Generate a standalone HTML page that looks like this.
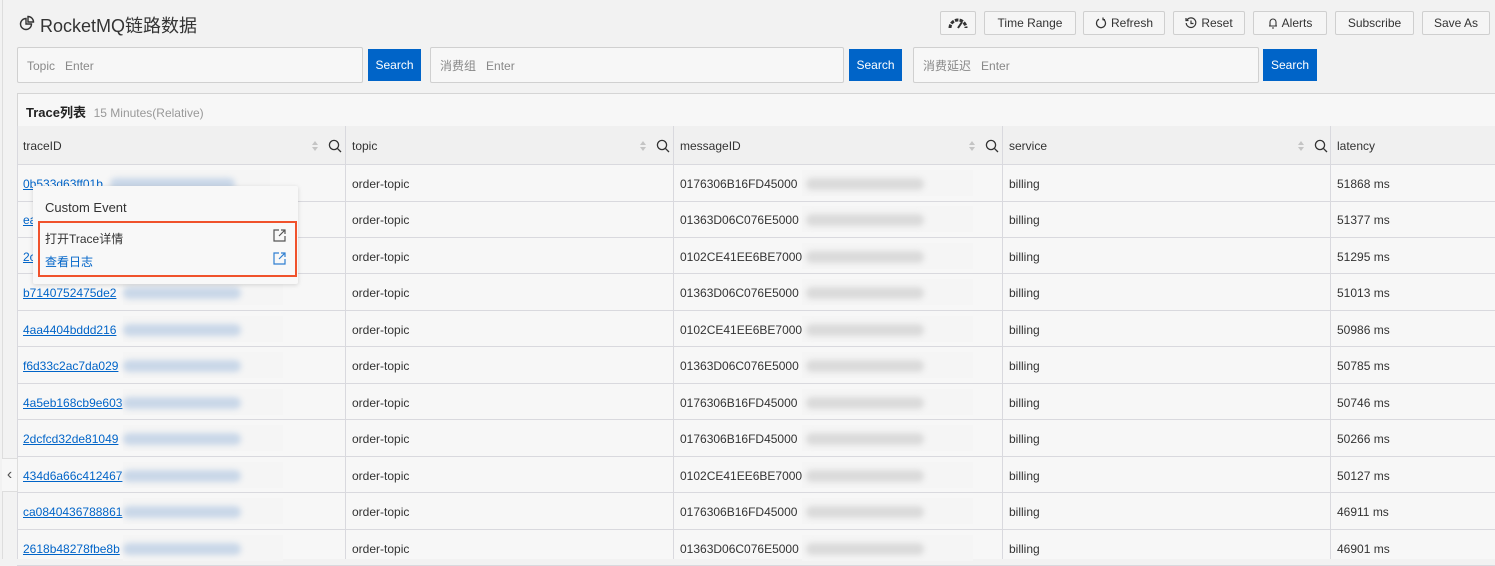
<!DOCTYPE html>
<html><head><meta charset="utf-8"><style>
*{box-sizing:border-box;margin:0;padding:0}
body{width:1495px;height:559px;overflow:hidden;background:#f2f2f2;font-family:"Liberation Sans","Noto Sans CJK SC",sans-serif;font-size:12px;color:#333;position:relative}
.a{position:absolute}
.btn{position:absolute;top:11px;height:24px;border:1px solid #cfcfcf;background:#f5f5f5;font-size:12px;color:#333;display:flex;align-items:center;justify-content:center;gap:4px;border-radius:2px}
.inp{position:absolute;top:47px;height:36px;border:1px solid #d0d0d0;background:#f7f7f7;border-radius:2px;color:#888;font-size:12px;line-height:36px;padding-left:9px}
.inp span{margin-left:10px}
.sb{position:absolute;top:49px;height:32px;background:#0064c8;color:#fff;font-size:12px;line-height:32px;text-align:center}
.row{position:absolute;left:17px;width:1478px;border-bottom:1px solid #d9d9de;height:36.5px}
.c{position:absolute;font-size:12px;color:#333;top:12px}
.vl{position:absolute;top:126px;bottom:0;width:1px;background:#d9d9de}
.lnk{color:#0064c8;text-decoration:underline}
.blur{position:absolute;height:12px;border-radius:6px;background:#c9d7e8;filter:blur(3px)}
.gb{position:absolute;height:12px;border-radius:6px;background:#dadada;filter:blur(3px)}
.cov{position:absolute;height:26px;background:#f5f5f5}
</style></head><body>
<div class="a" style="left:2px;top:0;width:1px;height:559px;background:#ddd"></div>
<svg class="a" style="left:19px;top:15px" width="16" height="16" viewBox="0 0 16 16" fill="none" stroke="#333" stroke-width="1.4"><path d="M7 3.5A5.5 5.5 0 1 0 12.5 9H7Z"/><path d="M9 1.5v5.5h5.5A5.5 5.5 0 0 0 9 1.5Z"/></svg>
<div class="a" style="left:40px;top:12px;font-size:18px;color:#333">RocketMQ链路数据</div>

<div class="btn" style="left:940px;width:36px"><svg width="22" height="12" viewBox="0 0 22 12"><path d="M3 11A8 8 0 0 1 19 11" fill="none" stroke="#333" stroke-width="3" stroke-dasharray="3.5 1.2"/><path d="M11 11L15 5" stroke="#333" stroke-width="2"/></svg></div>
<div class="btn" style="left:984px;width:92px">Time Range</div>
<div class="btn" style="left:1083px;width:82px"><svg width="12" height="12" viewBox="0 0 12 12" fill="none" stroke="#333" stroke-width="1.2"><path d="M4 2.2A4.5 4.5 0 1 0 8 2.2"/><path d="M8 0.5V2.6H10"/></svg>Refresh</div>
<div class="btn" style="left:1173px;width:72px"><svg width="12" height="12" viewBox="0 0 12 12" fill="none" stroke="#333" stroke-width="1.2"><path d="M2 3A4.8 4.8 0 1 1 1.2 6"/><path d="M1 1v2.5h2.5M6 3.5V6.5H8.5"/></svg>Reset</div>
<div class="btn" style="left:1253px;width:74px"><svg width="10" height="12" viewBox="0 0 10 12"><path d="M2 9V5a3 3 0 0 1 6 0v4H1h8M4 11h2" fill="none" stroke="#333" stroke-width="1.1"/></svg>Alerts</div>
<div class="btn" style="left:1335px;width:79px">Subscribe</div>
<div class="btn" style="left:1422px;width:68px">Save As</div>

<div class="inp" style="left:17px;width:346px">Topic<span>Enter</span></div>
<div class="sb" style="left:368px;width:53px">Search</div>
<div class="inp" style="left:430px;width:414px">消费组<span>Enter</span></div>
<div class="sb" style="left:849px;width:53px">Search</div>
<div class="inp" style="left:913px;width:346px">消费延迟<span>Enter</span></div>
<div class="sb" style="left:1263px;width:54px">Search</div>

<div class="a" style="left:17px;top:93px;width:1478px;height:466px;background:#f7f7f7;border-top:1px solid #d5d5d5;border-left:1px solid #d5d5d5"></div>
<div class="a" style="left:26px;top:102px;font-size:13px;font-weight:bold;color:#222">Trace列表 <span style="font-weight:normal;color:#999;font-size:12px;margin-left:4px">15 Minutes(Relative)</span></div>
<div class="a" style="left:17px;top:126px;width:1478px;height:39px;background:#f0f0f0;border-bottom:1px solid #d9d9de"></div>
<div class="vl" style="left:17px"></div>
<div class="vl" style="left:345px"></div><div class="vl" style="left:673px"></div><div class="vl" style="left:1002px"></div><div class="vl" style="left:1330px"></div>
<div class="c" style="left:23px;top:139px">traceID</div>
<div class="c" style="left:352px;top:139px">topic</div>
<div class="c" style="left:680px;top:139px">messageID</div>
<div class="c" style="left:1009px;top:139px">service</div>
<div class="c" style="left:1337px;top:139px">latency</div>
<div id="hd"></div>

<div id="rows"></div>
<script>
var hx=[311,639,968,1297],hh="";
for(var k=0;k<4;k++){hh+='<svg class="a" style="left:'+hx[k]+'px;top:140px" width="8" height="12" viewBox="0 0 8 12"><path d="M4 1L7 5H1Z M4 11L7 7H1Z" fill="#c4c4c4"/></svg><svg class="a" style="left:'+(hx[k]+17)+'px;top:139px" width="14" height="14" viewBox="0 0 14 14" fill="none" stroke="#333" stroke-width="1.3"><circle cx="6" cy="6" r="4.6"/><path d="M9.4 9.4L13 13"/></svg>';}
document.getElementById('hd').innerHTML=hh;
var t=["0b533d63ff01b","ea","2c","b7140752475de2","4aa4404bddd216","f6d33c2ac7da029","4a5eb168cb9e603","2dcfcd32de81049","434d6a66c412467","ca0840436788861","2618b48278fbe8b"];
var m=["0176306B16FD45000","01363D06C076E5000","0102CE41EE6BE70008","01363D06C076E5000","0102CE41EE6BE70008","01363D06C076E5000","0176306B16FD45000","0176306B16FD45000","0102CE41EE6BE70008","0176306B16FD45000","01363D06C076E5000"];
var l=["51868","51377","51295","51013","50986","50785","50746","50266","50127","46911","46901"];
var h="";
for(var i=0;i<11;i++){var y=165+i*36.45;var bx=(i<1?110:123);
h+='<div class="row" style="top:'+y+'px"></div>';
h+='<div class="c lnk" style="left:23px;top:'+(y+12)+'px">'+t[i]+'</div>';
h+='<div class="cov" style="left:'+bx+'px;width:160px;top:'+(y+5)+'px"></div>';
h+='<div class="blur" style="left:'+bx+'px;width:'+(i<1?125:118)+'px;top:'+(y+13)+'px"></div>';
h+='<div class="c" style="left:352px;top:'+(y+12)+'px">order-topic</div>';
h+='<div class="c" style="left:680px;top:'+(y+12)+'px">'+m[i]+'</div>';
h+='<div class="cov" style="left:802px;width:171px;top:'+(y+5)+'px"></div>';
h+='<div class="gb" style="left:806px;width:118px;top:'+(y+13)+'px"></div>';
h+='<div class="c" style="left:1009px;top:'+(y+12)+'px">billing</div>';
h+='<div class="c" style="left:1337px;top:'+(y+12)+'px">'+l[i]+' ms</div>';}
document.getElementById('rows').innerHTML=h;
</script>

<div class="a" style="left:33px;top:186px;width:265px;height:98px;background:#f8f8f8;box-shadow:0 1px 5px rgba(0,0,0,.15);border-radius:2px"></div>
<div class="a" style="left:45px;top:200px;font-size:13px;color:#333">Custom Event</div>
<div class="a" style="left:38px;top:221px;width:259px;height:56px;border:2px solid #f0522c"></div>
<div class="a" style="left:45px;top:230px;font-size:12px;color:#333">打开Trace详情</div>
<div class="a" style="left:45px;top:253px;font-size:12px;color:#0064c8">查看日志</div>
<svg class="a" style="left:273px;top:229px" width="13" height="13" viewBox="0 0 13 13" fill="none" stroke="#555" stroke-width="1.2"><path d="M6 1H1v11h11V7M8 1h4v4M12 1L6 7"/></svg>
<svg class="a" style="left:273px;top:252px" width="13" height="13" viewBox="0 0 13 13" fill="none" stroke="#2f7fd1" stroke-width="1.2"><path d="M6 1H1v11h11V7M8 1h4v4M12 1L6 7"/></svg>

<div class="a" style="left:2px;top:458px;width:16px;height:34px;background:#f7f7f7;border:1px solid #ddd;border-left:none;color:#555;font-size:16px;line-height:32px;text-align:center">‹</div>
</body></html>
